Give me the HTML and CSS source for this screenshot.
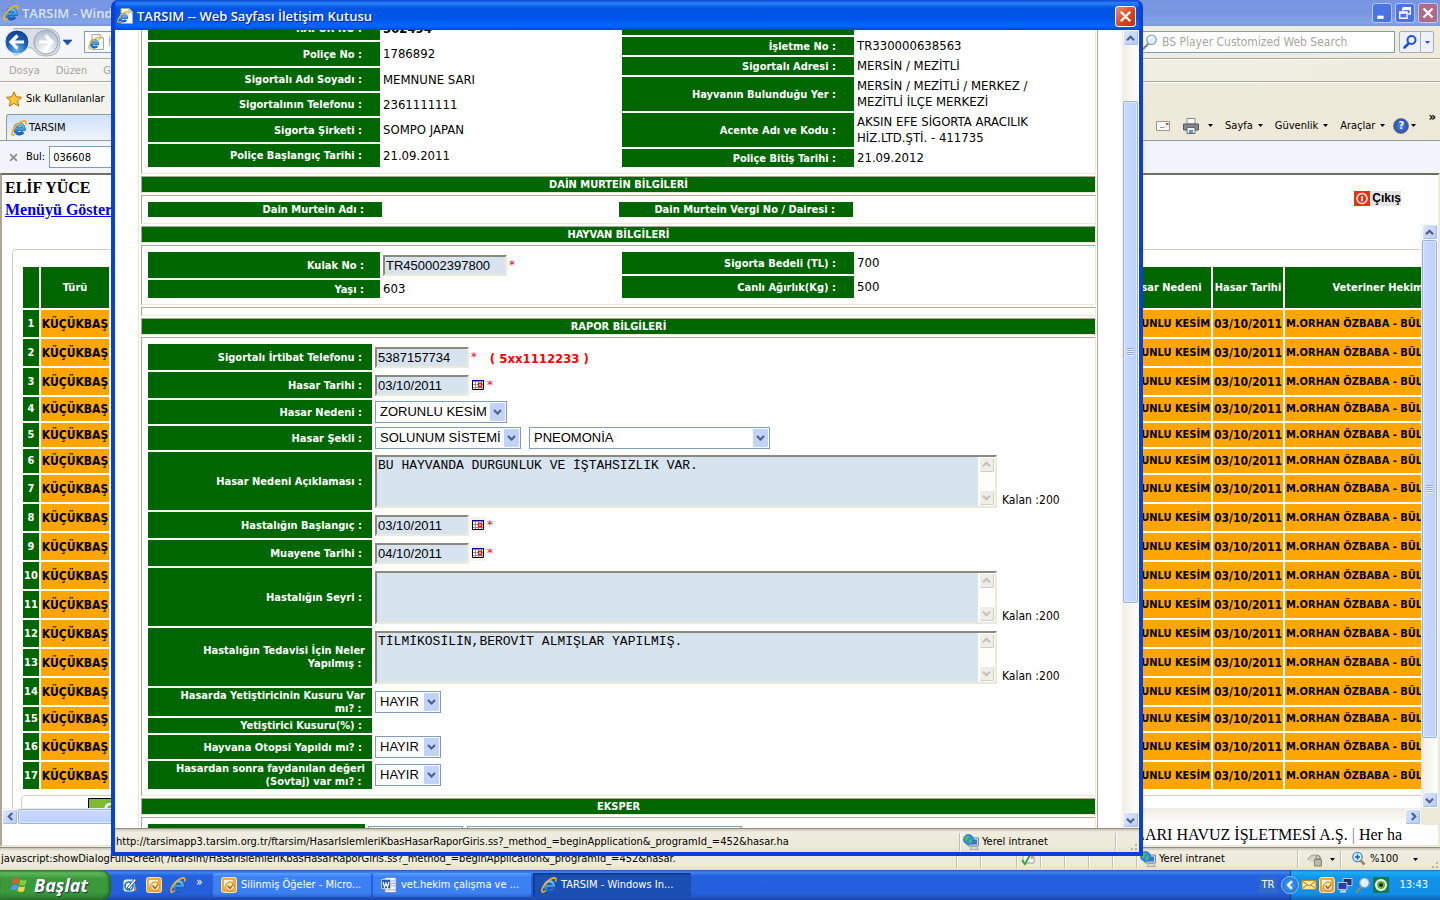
FILE: index.html
```
<!DOCTYPE html>
<html lang="tr">
<head>
<meta charset="utf-8">
<title>TARSIM</title>
<link rel="stylesheet" href="styles.css">
</head>
<body>
<svg class="defs" aria-hidden="true">
  <defs>
    <linearGradient id="gBlue" x1="0" y1="0" x2="0" y2="1"><stop offset="0" stop-color="#6cc6fb"/><stop offset="1" stop-color="#1668c8"/></linearGradient>
    <radialGradient id="gNav" cx=".5" cy=".85" r=".9"><stop offset="0" stop-color="#5fb4f0"/><stop offset=".5" stop-color="#1c5cb4"/><stop offset="1" stop-color="#123a80"/></radialGradient>
    <radialGradient id="gNavOff" cx=".5" cy=".9" r=".9"><stop offset="0" stop-color="#ffffff"/><stop offset="1" stop-color="#aebccb"/></radialGradient>
  </defs>
  <symbol id="ie" viewBox="0 0 16 16">
    <path d="M4 9h9A4.500 4.700 0 1 0 12 12" fill="none" stroke="#0f4f9e" stroke-width="3.400"/>
    <path d="M4 9h9A4.500 4.700 0 1 0 12 12" fill="none" stroke="url(#gBlue)" stroke-width="2.500"/>
    <path d="M5 13.500C2.500 15.700.8 15.600.9 13.500 1.200 9 8 1.300 13 .9c2.300-.1 2.300 1.800 1.400 3.800" fill="none" stroke="#f0b020" stroke-width="1.600"/>
  </symbol>
  <symbol id="iepage" viewBox="0 0 16 16">
    <path d="M4 .5h8l3.500 3.500v11.500H4z" fill="#fdfdfd" stroke="#a9a89d"/><path d="M12 .5V4h3.500" fill="#ddd" stroke="#a9a89d"/>
    <use href="#ie" x="0" y="3" width="12" height="12"/>
  </symbol>
  <symbol id="lens" viewBox="0 0 16 16">
    <path d="M6 10L1.500 14.800" stroke="#8b8578" stroke-width="2.200" stroke-linecap="round"/><circle cx="9.500" cy="5.800" r="4.800" fill="#dcf1fd" stroke="#8f9ba6" stroke-width="1.200"/><path d="M7 5a3 3 0 0 1 3-2" stroke="#fff" stroke-width="1.500" fill="none"/>
  </symbol>
  <symbol id="lensblue" viewBox="0 0 16 16">
    <path d="M6.500 9.500L2.500 13.500" stroke="#1f50dd" stroke-width="2.600" stroke-linecap="round"/><circle cx="9.500" cy="6" r="4" fill="#eef5ff" stroke="#1f50dd" stroke-width="2"/>
  </symbol>
  <symbol id="up" viewBox="0 0 9 9"><path d="M1 6.300L4.500 2.800 8 6.300" fill="none" stroke="currentColor" stroke-width="2.100"/></symbol>
  <symbol id="down" viewBox="0 0 9 9"><path d="M1 2.800L4.500 6.300 8 2.800" fill="none" stroke="currentColor" stroke-width="2.100"/></symbol>
  <symbol id="left" viewBox="0 0 9 9"><path d="M6.300 1L2.800 4.500 6.300 8" fill="none" stroke="currentColor" stroke-width="2.100"/></symbol>
  <symbol id="right" viewBox="0 0 9 9"><path d="M2.800 1L6.300 4.500 2.800 8" fill="none" stroke="currentColor" stroke-width="2.100"/></symbol>
  <symbol id="x" viewBox="0 0 12 12"><path d="M1.500 1.500l9 9M10.500 1.500l-9 9" stroke="currentColor" stroke-width="2.200"/></symbol>
  <symbol id="tri" viewBox="0 0 5 3"><path d="M0 0h5L2.500 3z" fill="currentColor"/></symbol>
  <symbol id="globe" viewBox="0 0 16 16">
    <path d="M5 4h10.500v8H5z" fill="#cfdcec" stroke="#7b8ba5"/><path d="M6.500 5.500h7.500v5H6.500z" fill="#3c74d0"/><path d="M8 12.500h6l1.500 3H7z" fill="#d9d9d4" stroke="#8c8c88" stroke-width=".6"/>
    <circle cx="5.500" cy="5.500" r="5" fill="#2f8fe0" stroke="#125aa8" stroke-width=".6"/><path d="M2 3c2-2 4-1.500 4 0s-2 1-2 3-2 0-2.800-1zM6 6c2-1 3 0 3 1s-2 3-3 2z" fill="#4fc04a"/>
  </symbol>
  <symbol id="cal" viewBox="0 0 16 16">
    <path d="M0 0h16v16H0z" fill="#f3f1f3"/><path d="M2.500 3.500h11v9h-11z" fill="#fff" stroke="#000"/><path d="M2 3h12v1.500H2z" fill="#10108a"/><path d="M5.500 5v7M8.500 5v7M11.500 5v7M3 7.500h10M3 10.500h10" stroke="#8d8d8d"/><path d="M8.500 6.500h3v3h-3z" fill="#fff" stroke="#f01010" stroke-width="1.300"/>
  </symbol>
  <symbol id="outlook" viewBox="0 0 16 16">
    <rect x=".5" y=".5" width="15" height="15" rx="2" fill="#f4a836" stroke="#fbe4bd"/><path d="M3 3h9l-1 4 3 1-1 5H5L3 9z" fill="#fff3dc"/><circle cx="9" cy="9.500" r="4.500" fill="#fbe3a2" stroke="#c97d1b"/><path d="M6.500 8.500l2.500 3 3-4" fill="none" stroke="#8a5a18" stroke-width="1.200"/>
  </symbol>
  <symbol id="word" viewBox="0 0 16 16">
    <path d="M4 .5h11v15H4z" fill="#fff" stroke="#6d8cc7"/><path d="M9 4h5M9 6.500h5M9 9h5M6 13h8" stroke="#8aa3d4"/><path d="M.5 2.500h9v9h-9z" fill="#2c55a8" stroke="#b9cbec"/><path d="M2 5l1.500 5L5 6l1.500 4L8 5" fill="none" stroke="#fff" stroke-width="1.200"/>
  </symbol>
  <symbol id="desk" viewBox="0 0 16 16">
    <rect x="1" y="2" width="12" height="13" rx="3" fill="#e4f2ff" stroke="#2b77c0"/><circle cx="7" cy="9" r="4" fill="#fff" stroke="#1c6fbb" stroke-width="1.600"/><path d="M5 11l7.500-9.500L14.500 3 7 12z" fill="#fff" stroke="#1b3f70" stroke-width=".9"/><path d="M13.500 10v4" stroke="#e07a30" stroke-width="1.500"/>
  </symbol>
</svg>

<div class="desktop">
  <section class="browser">
    <header class="titlebar dim">
      <svg class="i16"><use href="#ie"/></svg>
      <span class="caption">TARSIM - Windows</span>
      <span class="grow"></span>
      <button class="winbtn" aria-label="Simge durumuna küçült"><svg viewBox="0 0 17 17"><path d="M4 11h6v3H4z" fill="#fff"/></svg></button>
      <button class="winbtn" aria-label="Geri yükle"><svg viewBox="0 0 17 17"><path d="M6.500 3.500h7v6h-2M6.500 5h7M6.500 3.500v3M3.500 7.500h7v6h-7zM3.500 8.500h7" fill="none" stroke="#fff" stroke-width="1.300"/></svg></button>
      <button class="winbtn rose" aria-label="Kapat"><svg viewBox="-3 -3 18 18"><use href="#x" width="12" height="12"/></svg></button>
    </header>

    <div class="navbar">
      <svg class="navkeys" viewBox="0 0 76 32">
        <path d="M14 2.500h32q14 0 14 14t-14 13.500q-8 0-12-6-5-5-9 0-4 5-11 5z" fill="#d9dee4" stroke="#aab2bb"/>
        <circle cx="17" cy="16" r="12" fill="url(#gNav)" stroke="#e8eef6"/><path d="M17.500 9.500L11 16l6.500 6.500M11.500 16H24" stroke="#fff" stroke-width="3.200" fill="none"/>
        <circle cx="46" cy="16" r="12" fill="url(#gNavOff)" stroke="#9aa4af"/><path d="M45.500 9.500L52 16l-6.500 6.500M51.500 16H39" stroke="#fff" stroke-width="3.200" fill="none"/>
        <path d="M63 14h9l-4.500 5z" fill="#1b56a5" stroke="#123c78" stroke-width=".6"/>
      </svg>
      <div class="address"><svg class="i16"><use href="#iepage"/></svg><input aria-label="Adres" value="http://tarsimapp3.tarsim.org.tr"></div>
      <div class="searchbox"><svg class="i16"><use href="#lens"/></svg><input aria-label="Ara" value="BS Player Customized Web Search"></div>
      <div class="searchgo">
        <button aria-label="Ara"><svg class="i16"><use href="#lensblue"/></svg></button>
        <button aria-label="Arama seçenekleri"><svg class="tri blue"><use href="#tri"/></svg></button>
      </div>
    </div>

    <nav class="menubar"><span>Dosya</span><span>Düzen</span><span>Görünüm</span></nav>

    <div class="commands">
      <div class="side">
        <div class="favs"><svg viewBox="0 0 16 16" class="i16"><path d="M8 .8l2.200 5 5.300.5-4 3.600 1.200 5.300L8 12.400l-4.700 2.800 1.200-5.300-4-3.600 5.300-.5z" fill="#ffc53a" stroke="#b97710"/></svg>Sık Kullanılanlar</div>
        <div class="tab"><svg class="i16"><use href="#ie"/></svg>TARSIM</div>
      </div>
      <div class="tools">
        <svg class="i16" viewBox="0 0 16 16"><path d="M1.500 3.500h13v9h-13z" fill="#fbfbf9" stroke="#98978d"/><path d="M11 5h2.500v2H11z" fill="#d44"/><path d="M5 9.500h4.500" stroke="#99a"/></svg>
        <span class="tool"><svg class="i16" viewBox="0 0 16 16"><path d="M4 .5h8V6H4z" fill="#fff" stroke="#889"/><path d="M.5 6h15v6H.5z" fill="#85878c" stroke="#55575c"/><path d="M4 9.500h8v6H4z" fill="#eaf4ff" stroke="#667"/><path d="M6 12h4v3H6z" fill="#69b"/></svg><svg class="tri wide"><use href="#tri"/></svg></span>
        <span class="tool">Sayfa<svg class="tri"><use href="#tri"/></svg></span>
        <span class="tool">Güvenlik<svg class="tri"><use href="#tri"/></svg></span>
        <span class="tool">Araçlar<svg class="tri"><use href="#tri"/></svg></span>
        <span class="tool help"><span class="q">?</span><svg class="tri"><use href="#tri"/></svg></span>
        <b class="more">»</b>
      </div>
    </div>

    <div class="findbar"><svg class="fx"><use href="#x"/></svg><label for="bul">Bul:</label><input id="bul" value="036608"></div>

    <main class="page">
      <div class="user">
        <div><b>ELİF YÜCE</b><a href="#">Menüyü Göster</a></div>
        <button class="exit"><svg viewBox="0 0 16 15"><path d="M0 0h16v15H0z" fill="#dc3a17"/><circle cx="8" cy="7.500" r="5" fill="none" stroke="#ffe9df" stroke-width="1.500"/><path d="M8 5v5" stroke="#fff" stroke-width="1.600"/></svg>Çıkış</button>
      </div>
      <div class="frame">
        <div class="listing">
          <div class="group">
            <table>
              <colgroup><col class="c1"><col class="c2"><col><col class="c4"><col class="c5"><col class="c6"></colgroup>
              <thead><tr><th></th><th>Türü</th><td></td><th>Hasar Nedeni</th><th>Hasar Tarihi</th><th>Veteriner Hekim</th></tr></thead>
              <tbody>
                <tr><th>1</th><td>KÜÇÜKBAŞ</td><td></td><td>ZORUNLU KESİM</td><td>03/10/2011</td><td>M.ORHAN ÖZBABA - BÜLENT</td></tr>
                <tr><th>2</th><td>KÜÇÜKBAŞ</td><td></td><td>ZORUNLU KESİM</td><td>03/10/2011</td><td>M.ORHAN ÖZBABA - BÜLENT</td></tr>
                <tr><th>3</th><td>KÜÇÜKBAŞ</td><td></td><td>ZORUNLU KESİM</td><td>03/10/2011</td><td>M.ORHAN ÖZBABA - BÜLENT</td></tr>
                <tr class="low"><th>4</th><td>KÜÇÜKBAŞ</td><td></td><td>ZORUNLU KESİM</td><td>03/10/2011</td><td>M.ORHAN ÖZBABA - BÜLENT</td></tr>
                <tr class="low"><th>5</th><td>KÜÇÜKBAŞ</td><td></td><td>ZORUNLU KESİM</td><td>03/10/2011</td><td>M.ORHAN ÖZBABA - BÜLENT</td></tr>
                <tr class="low"><th>6</th><td>KÜÇÜKBAŞ</td><td></td><td>ZORUNLU KESİM</td><td>03/10/2011</td><td>M.ORHAN ÖZBABA - BÜLENT</td></tr>
                <tr><th>7</th><td>KÜÇÜKBAŞ</td><td></td><td>ZORUNLU KESİM</td><td>03/10/2011</td><td>M.ORHAN ÖZBABA - BÜLENT</td></tr>
                <tr><th>8</th><td>KÜÇÜKBAŞ</td><td></td><td>ZORUNLU KESİM</td><td>03/10/2011</td><td>M.ORHAN ÖZBABA - BÜLENT</td></tr>
                <tr><th>9</th><td>KÜÇÜKBAŞ</td><td></td><td>ZORUNLU KESİM</td><td>03/10/2011</td><td>M.ORHAN ÖZBABA - BÜLENT</td></tr>
                <tr><th>10</th><td>KÜÇÜKBAŞ</td><td></td><td>ZORUNLU KESİM</td><td>03/10/2011</td><td>M.ORHAN ÖZBABA - BÜLENT</td></tr>
                <tr><th>11</th><td>KÜÇÜKBAŞ</td><td></td><td>ZORUNLU KESİM</td><td>03/10/2011</td><td>M.ORHAN ÖZBABA - BÜLENT</td></tr>
                <tr><th>12</th><td>KÜÇÜKBAŞ</td><td></td><td>ZORUNLU KESİM</td><td>03/10/2011</td><td>M.ORHAN ÖZBABA - BÜLENT</td></tr>
                <tr><th>13</th><td>KÜÇÜKBAŞ</td><td></td><td>ZORUNLU KESİM</td><td>03/10/2011</td><td>M.ORHAN ÖZBABA - BÜLENT</td></tr>
                <tr><th>14</th><td>KÜÇÜKBAŞ</td><td></td><td>ZORUNLU KESİM</td><td>03/10/2011</td><td>M.ORHAN ÖZBABA - BÜLENT</td></tr>
                <tr class="low"><th>15</th><td>KÜÇÜKBAŞ</td><td></td><td>ZORUNLU KESİM</td><td>03/10/2011</td><td>M.ORHAN ÖZBABA - BÜLENT</td></tr>
                <tr><th>16</th><td>KÜÇÜKBAŞ</td><td></td><td>ZORUNLU KESİM</td><td>03/10/2011</td><td>M.ORHAN ÖZBABA - BÜLENT</td></tr>
                <tr><th>17</th><td>KÜÇÜKBAŞ</td><td></td><td>ZORUNLU KESİM</td><td>03/10/2011</td><td>M.ORHAN ÖZBABA - BÜLENT</td></tr>
              </tbody>
            </table>
            <div class="pager"><button>Getir</button></div>
          </div>
        </div>
        <div class="vbar"><span class="sb"><svg><use href="#up"/></svg></span><span class="thumb t-page"><i></i></span><span class="grow"></span><span class="sb"><svg><use href="#down"/></svg></span></div>
        <div class="hbar"><span class="sb"><svg><use href="#left"/></svg></span><span class="thumb t-wide"></span><span class="grow"></span><span class="sb"><svg><use href="#right"/></svg></span></div>
        <div class="corner"></div>
      </div>
      <div class="marquee">HAVUZLARI HAVUZ İŞLETMESİ A.Ş. <i>|</i> Her ha</div>
    </main>

    <footer class="status">
      <span class="grow">javascript:showDialogFullScreen('/ftarsim/HasarIslemleriKbasHasarRaporGiris.ss?_method_=beginApplication&amp;_programId_=452&amp;hasar.</span>
      <span class="pane"></span><span class="pane wide"></span>
      <span class="pane check"><svg class="i16" viewBox="0 0 16 16"><path d="M3 2h11v10H3z" fill="#fff" stroke="#99a"/><path d="M2 9l3 4 5-9" fill="none" stroke="#34a83a" stroke-width="2"/><path d="M12 4v4" stroke="#d66" stroke-width="1.500"/></svg></span>
      <span class="pane"></span><span class="pane"></span><span class="pane"></span><span class="pane"></span>
      <span class="pane zone"><svg class="i16"><use href="#globe"/></svg>Yerel intranet</span>
      <span class="pane lock"><svg class="i16" viewBox="0 0 16 16"><path d="M1 9a7 6 0 0 1 13-2l-5 1v5" fill="#d5d4cc" stroke="#9b9a92"/><path d="M7.500 8.500h7v6.500h-7z" fill="#bbb9ae" stroke="#838278"/><path d="M9 8V6.500a2 2 0 0 1 4 0V8" fill="none" stroke="#838278"/></svg><svg class="tri"><use href="#tri"/></svg></span>
      <span class="pane zoom"><svg class="i16" viewBox="0 0 16 16"><path d="M9.500 9.500l4 4" stroke="#b58048" stroke-width="2.500"/><circle cx="6.500" cy="6" r="4.700" fill="#d9efff" stroke="#4887c8" stroke-width="1.300"/><path d="M4 6h5M6.500 3.500v5" stroke="#1e5db5" stroke-width="1.600"/></svg>%100<svg class="tri"><use href="#tri"/></svg></span>
      <span class="grip"></span>
    </footer>
  </section>

  <section class="dialog" role="dialog" aria-label="TARSIM -- Web Sayfası İletişim Kutusu">
    <header class="titlebar">
      <svg class="i16"><use href="#iepage"/></svg>
      <span class="caption">TARSIM -- Web Sayfası İletişim Kutusu</span>
      <span class="grow"></span>
      <button class="winbtn red" aria-label="Kapat"><svg viewBox="-3 -3 18 18"><use href="#x" width="12" height="12"/></svg></button>
    </header>
    <div class="body">
      <form class="sheet">
        <div class="box two">
          <div class="col">
            <div class="row h23"><span class="lb">RAPOR NO :</span><b>302494</b></div>
            <div class="row h24"><span class="lb">Poliçe No :</span><span>1786892</span></div>
            <div class="row h23"><span class="lb">Sigortalı Adı Soyadı :</span><span>MEMNUNE SARI</span></div>
            <div class="row h23"><span class="lb">Sigortalının Telefonu :</span><span>2361111111</span></div>
            <div class="row h24"><span class="lb">Sigorta Şirketi :</span><span>SOMPO JAPAN</span></div>
            <div class="row h23"><span class="lb">Poliçe Başlangıç Tarihi :</span><span>21.09.2011</span></div>
          </div>
          <div class="col">
            <div class="row h18"><span class="lb">TARSIM No :</span><b>20112200342</b></div>
            <div class="row h18"><span class="lb">İşletme No :</span><span>TR330000638563</span></div>
            <div class="row h18"><span class="lb">Sigortalı Adresi :</span><span>MERSİN / MEZİTLİ</span></div>
            <div class="row h34"><span class="lb">Hayvanın Bulunduğu Yer :</span><span>MERSİN / MEZİTLİ / MERKEZ /<br>MEZİTLİ İLÇE MERKEZİ</span></div>
            <div class="row h34"><span class="lb">Acente Adı ve Kodu :</span><span>AKSIN EFE SİGORTA ARACILIK<br>HİZ.LTD.ŞTİ. - 411735</span></div>
            <div class="row h18"><span class="lb">Poliçe Bitiş Tarihi :</span><span>21.09.2012</span></div>
          </div>
        </div>
        <h2>DAİN MURTEİN BİLGİLERİ</h2>
        <div class="box two dain">
          <div class="col"><div class="row h15"><span class="lb">Dain Murtein Adı :</span></div></div>
          <div class="col"><div class="row h15"><span class="lb">Dain Murtein Vergi No / Dairesi :</span></div></div>
        </div>
        <h2>HAYVAN BİLGİLERİ</h2>
        <div class="box two">
          <div class="col near">
            <div class="row h26"><label class="lb" for="kulak">Kulak No :</label><span class="vals"><input class="in w124" id="kulak" value="TR450002397800"><em>*</em></span></div>
            <div class="row h18"><span class="lb">Yaşı :</span><span>603</span></div>
          </div>
          <div class="col">
            <div class="row h22"><span class="lb">Sigorta Bedeli (TL) :</span><span>700</span></div>
            <div class="row h22"><span class="lb">Canlı Ağırlık(Kg) :</span><span>500</span></div>
          </div>
        </div>
        <div class="empty"></div>
        <h2>RAPOR BİLGİLERİ</h2>
        <div class="box rapor">
          <div class="row h26"><label class="lb" for="tel">Sigortalı İrtibat Telefonu :</label><span class="vals"><input class="in" id="tel" value="5387157734"><em>*</em><strong>( 5xx1112233 )</strong></span></div>
          <div class="row h26"><label class="lb" for="ht">Hasar Tarihi :</label><span class="vals"><input class="in" id="ht" value="03/10/2011"><svg class="i16 cal"><use href="#cal"/></svg><em>*</em></span></div>
          <div class="row h24"><label class="lb" for="hn">Hasar Nedeni :</label><span class="vals"><select class="w132" id="hn"><option>ZORUNLU KESİM</option></select></span></div>
          <div class="row h24"><label class="lb" for="hs">Hasar Şekli :</label><span class="vals"><select class="w146" id="hs"><option>SOLUNUM SİSTEMİ</option></select><select class="w241" aria-label="Hasar şekli ayrıntısı"><option>PNEOMONİA</option></select></span></div>
          <div class="row h58"><label class="lb" for="ac">Hasar Nedeni Açıklaması :</label><span class="vals end"><span class="ta"><textarea id="ac">BU HAYVANDA DURGUNLUK VE İŞTAHSIZLIK VAR.</textarea><span class="vbar off"><span class="sb"><svg><use href="#up"/></svg></span><span class="grow"></span><span class="sb"><svg><use href="#down"/></svg></span></span></span><span>Kalan :200</span></span></div>
          <div class="row h26"><label class="lb" for="hb">Hastalığın Başlangıç :</label><span class="vals"><input class="in" id="hb" value="03/10/2011"><svg class="i16 cal"><use href="#cal"/></svg><em>*</em></span></div>
          <div class="row h26"><label class="lb" for="mt">Muayene Tarihi :</label><span class="vals"><input class="in" id="mt" value="04/10/2011"><svg class="i16 cal"><use href="#cal"/></svg><em>*</em></span></div>
          <div class="row h58"><label class="lb" for="se">Hastalığın Seyri :</label><span class="vals end"><span class="ta"><textarea id="se"></textarea><span class="vbar off"><span class="sb"><svg><use href="#up"/></svg></span><span class="grow"></span><span class="sb"><svg><use href="#down"/></svg></span></span></span><span>Kalan :200</span></span></div>
          <div class="row h58"><label class="lb" for="te">Hastalığın Tedavisi İçin Neler<br>Yapılmış :&nbsp;</label><span class="vals end"><span class="ta"><textarea id="te">TİLMİKOSİLİN,BEROVİT ALMIŞLAR YAPILMIŞ.</textarea><span class="vbar off"><span class="sb"><svg><use href="#up"/></svg></span><span class="grow"></span><span class="sb"><svg><use href="#down"/></svg></span></span></span><span>Kalan :200</span></span></div>
          <div class="row h28"><label class="lb" for="ku">Hasarda Yetiştiricinin Kusuru Var<br>mı? :&nbsp;</label><span class="vals"><select class="w66" id="ku"><option>HAYIR</option></select></span></div>
          <div class="row h15"><span class="lb">Yetiştirici Kusuru(%) :</span></div>
          <div class="row h24"><label class="lb" for="ot">Hayvana Otopsi Yapıldı mı? :</label><span class="vals"><select class="w66" id="ot"><option>HAYIR</option></select></span></div>
          <div class="row h28"><label class="lb" for="so">Hasardan sonra faydanılan değeri<br>(Sovtaj) var mı? :&nbsp;</label><span class="vals"><select class="w66" id="so"><option>HAYIR</option></select></span></div>
        </div>
        <h2>EKSPER</h2>
        <div class="box eksper">
          <div class="row h26"><span class="lb"></span><span class="vals"><select class="w95" aria-label="Eksper türü"><option></option></select><select class="w275" aria-label="Eksper"><option></option></select></span></div>
        </div>
      </form>
      <div class="vbar"><span class="sb"><svg><use href="#up"/></svg></span><span class="gap"></span><span class="thumb t-dialog"><i></i></span><span class="grow"></span><span class="sb"><svg><use href="#down"/></svg></span></div>
    </div>
    <footer class="status">
      <span class="grow">http://tarsimapp3.tarsim.org.tr/ftarsim/HasarIslemleriKbasHasarRaporGiris.ss?_method_=beginApplication&amp;_programId_=452&amp;hasar.ha</span>
      <span class="pane zone"><svg class="i16"><use href="#globe"/></svg>Yerel intranet</span>
      <span class="pane tail"></span>
      <span class="grip"></span>
    </footer>
  </section>
</div>

<footer class="taskbar">
  <button class="start"><svg viewBox="0 0 20 18"><path d="M3 3q3-2 6 0L8 8q-3-2-6 0z" fill="#f0562b"/><path d="M10 3.500q3 2 7 0l-1.500 5q-3 2-6.500 0z" fill="#7ed040"/><path d="M1.700 9.500q3-2 6 0l-1.200 5q-3-2-6 0z" fill="#4f9bf5"/><path d="M8.700 10q3 2 6.500 0l-1.200 5q-3 2-6.500 0z" fill="#fbd23c"/></svg>Başlat</button>
  <div class="quick"><svg class="i16"><use href="#desk"/></svg><svg class="i16"><use href="#outlook"/></svg><svg class="i16"><use href="#ie"/></svg><span>»</span></div>
  <button class="task"><svg class="i16"><use href="#outlook"/></svg>Silinmiş Öğeler - Micro...</button>
  <button class="task"><svg class="i16"><use href="#word"/></svg>vet.hekim çalışma ve ...</button>
  <button class="task on"><svg class="i16"><use href="#ie"/></svg>TARSIM - Windows In...</button>
  <span class="grow"></span>
  <span class="lang">TR</span>
  <div class="tray">
    <button class="expand" aria-label="Gizli simgeleri göster"><svg><use href="#left"/></svg></button>
    <svg class="i16" viewBox="0 0 16 16"><path d="M1 3.500h14v9H1z" fill="#ffe79b" stroke="#c78b1e"/><path d="M1 4l7 5 7-5M1 12l5-4M15 12l-5-4" fill="none" stroke="#b87b16"/></svg>
    <svg class="i16"><use href="#outlook"/></svg>
    <svg class="i16" viewBox="0 0 16 16"><path d="M6 1.500h9v7H6z" fill="#1a2f80" stroke="#b6c6e4"/><path d="M1 5.500h9v7H1z" fill="#27409d" stroke="#b6c6e4"/><path d="M3 14.500h6" stroke="#dde" stroke-width="2"/></svg>
    <svg class="i16"><use href="#lens"/></svg>
    <svg class="i16" viewBox="0 0 16 16"><path d="M0 0h16v16H0z" fill="#177a4c"/><circle cx="8" cy="8" r="6" fill="#fff"/><circle cx="8" cy="8" r="4" fill="#59b52e"/><circle cx="8" cy="8" r="1.800" fill="#111"/></svg>
    <time>13:43</time>
  </div>
</footer>
</body>
</html>
```
FILE: styles.css
```
:root {
  --ui: "DejaVu Sans Condensed", "Noto Sans", sans-serif;
  --green: #006600;
  --beige: #ece9d8;
}
* { box-sizing: border-box; }
html, body { height: 100%; }
body {
  margin: 0;
  display: flex;
  flex-direction: column;
  overflow: hidden;
  font: 11px/14px var(--ui);
  color: #000;
}
button, input, select, textarea { font: inherit; color: inherit; margin: 0; border-radius: 0; }
button { padding: 0; border: 0; background: none; }
svg { display: block; flex: none; }
.defs { position: absolute; width: 0; height: 0; }
.i16 { width: 16px; height: 16px; }
.grow { flex: 1; min-width: 0; white-space: nowrap; overflow: hidden; }
.tri { width: 5px; height: 3px; }
.tri.blue { color: #1f50dd; }

.desktop { flex: 1; min-height: 0; position: relative; }
.browser { height: 100%; display: flex; flex-direction: column; background: var(--beige); overflow: hidden; }

/* title bars */
.titlebar {
  display: flex;
  align-items: center;
  flex: none;
  height: 30px;
  gap: 4px;
  padding: 2px 3px 0 2px;
  color: #fff;
  background: linear-gradient(#0a48cf 0, #2b80fa 3px, #0054e3 8px, #0055e8 18px, #0066ff 26px, #0046c8 100%);
}
.caption { font: 600 13px/18px "Open Sans", sans-serif; white-space: nowrap; text-shadow: 1px 1px 0 #0a1883; }
.titlebar.dim { height: 26px; padding: 0 2px 1px 3px; gap: 3px; background: linear-gradient(#7695e2, #7a96df 50%, #82a6e8 85%, #7b95da); }
.dim .caption { color: #dbe4f8; text-shadow: none; }
.winbtn { width: 21px; height: 21px; border: 1px solid #fff; border-radius: 3px; background: linear-gradient(135deg, #5f8df0, #2458d8); }
.winbtn svg { width: 19px; height: 19px; color: #fff; }
.dim .winbtn { width: 20px; height: 20px; border-color: #b9c9f2; background: linear-gradient(135deg, #4b77e4, #4672e6); }
.dim .winbtn svg { width: 18px; height: 18px; }
.dim .winbtn.rose { background: #b06a86; }
.winbtn.red { background: linear-gradient(135deg, #f08b6a, #d8401a 60%, #c0330f); }

/* toolbars */
.navbar { display: flex; align-items: center; height: 33px; padding: 0 6px 0 0; background: linear-gradient(90deg, #f3f6fa, #f1efe4 60%, #eeebdb); border-bottom: 1px solid #aca899; }
.navkeys { width: 76px; height: 32px; }
.address, .searchbox { display: flex; align-items: center; gap: 4px; height: 22px; border: 1px solid #7f9db9; background: #fff; }
.address { flex: 1; margin: 0 20px 0 8px; padding-left: 3px; }
.searchbox { width: 256px; padding: 0 2px; margin-right: 4px; color: #a7a69a; }
.address input, .searchbox input { flex: 1; min-width: 0; border: 0; padding: 0; background: none; color: #a7a69a; outline: 0; font-size: 12px; }
.searchgo { display: flex; height: 22px; border: 1px solid #a9adba; border-radius: 2px; background: #edf1fa; }
.searchgo button { width: 20px; display: grid; place-items: center; }
.searchgo button + button { width: 13px; border-left: 1px solid #a9adba; }
.menubar { display: flex; gap: 16px; align-items: center; height: 23px; padding: 0 9px; color: #a7a69a; background: linear-gradient(90deg, #f4f4f2, #efecdf); border-top: 1px solid #fff; border-bottom: 1px solid #aca899; }
.commands { display: flex; justify-content: space-between; height: 59px; background: linear-gradient(90deg, #f4f4f0, #efecdf 40%, #ece9d8); border-top: 1px solid #fff; border-bottom: 1px solid #919b9c; }
.side { width: 300px; display: flex; flex-direction: column; justify-content: space-between; }
.favs { display: flex; align-items: center; gap: 4px; padding: 0 6px; height: 31px; }
.tab { display: flex; align-items: center; gap: 2px; height: 26px; margin-left: 6px; padding-left: 4px; border: 1px solid #919b9c; border-bottom: 0; border-radius: 3px 3px 0 0; background: linear-gradient(#cde1fb, #f0f4fa); }
.tools { display: flex; align-items: center; padding: 28px 4px 0 0; gap: 12px; }
.tool { display: flex; align-items: center; gap: 5px; }
.tri.wide { margin-left: 4px; }
.help { gap: 2px; margin-left: -4px; }
.q { width: 16px; height: 16px; border-radius: 50%; border: 1px solid #777; background: radial-gradient(#4f86e6, #1a3c9c); color: #fff; font-weight: bold; text-align: center; line-height: 14px; }
.more { font-size: 13px; align-self: flex-start; line-height: 12px; }
.findbar { display: flex; align-items: center; gap: 8px; height: 32px; padding: 0 9px; background: #f1f5fb; }
.fx { width: 9px; height: 9px; color: #8a8a86; }
.findbar input { width: 200px; height: 22px; margin-left: -4px; border: 1px solid #7f9db9; padding: 0 3px; }

/* page behind the dialog */
.page { flex: 1; min-height: 0; display: flex; flex-direction: column; background: #fff; border-top: 2px solid #716f64; border-left: 2px solid #aca899; border-right: 2px solid var(--beige); border-bottom: 2px solid var(--beige); }
.user { display: flex; justify-content: space-between; align-items: flex-start; height: 49px; padding: 2px 37px 0 3px; font: bold 16px/22px "Liberation Serif", serif; }
.user b, .user a { display: block; }
.user a { color: #0000ee; }
.exit { display: flex; align-items: center; gap: 2px; height: 15px; margin-top: 14px; background: #e4e4e4; font: bold 12px/15px "Liberation Sans", sans-serif; }
.exit svg { width: 16px; height: 15px; }
.frame { flex: 1; min-height: 0; display: grid; grid-template: minmax(0, 1fr) 17px / minmax(0, 1fr) 17px; }
.listing { overflow: hidden; padding: 25px 0 0 10px; }
.group { width: calc(100% + 80px); border: 1px solid #d0d0bf; border-radius: 4px 0 0 0; padding: 15px 0 0 8px; }
.group table { table-layout: fixed; width: calc(100% - 27px); border-spacing: 2px; font-weight: bold; }
.group th, .group td { padding: 0; height: 27px; white-space: nowrap; overflow: hidden; }
.group thead th { height: 41px; }
.group .low th, .group .low td { height: 24px; }
.group th { background: var(--green); color: #fff; }
.group tbody td { background: #ffa500; text-align: center; font-size: 12px; }
.group tbody td:nth-child(4) { font-size: 11px; text-align: right; padding-right: 1px; }
.group tbody td:last-child { font-size: 11px; text-align: left; padding-left: 1px; }
.group tbody td:nth-child(3) { background: none; }
.c1 { width: 16px; } .c2 { width: 68px; } .c4 { width: 94px; } .c5 { width: 70px; } .c6 { width: 186px; }
.pager { margin-top: 4px; height: 40px; border: 1px solid #d0d0bf; border-radius: 4px 0 0 0; padding: 2px 0 0 66px; }
.pager button { width: 120px; height: 24px; border: 1px solid #000; background: #82bb32; color: #fff; font: bold 16px/20px "Liberation Sans", sans-serif; text-align: left; padding-left: 15px; }
.marquee { flex: none; height: 20px; font: 16px/20px "Liberation Serif", serif; text-align: right; padding-right: 36px; white-space: nowrap; }
.marquee i { color: #77a; font-style: normal; }

/* scroll bars */
.vbar, .hbar { display: flex; align-items: center; }
.vbar { width: 17px; flex-direction: column; background: linear-gradient(90deg, #eeede5, #fefefb); }
.hbar { height: 17px; background: linear-gradient(#eeede5, #fefefb); }
.corner { background: var(--beige); }
.sb { flex: none; width: 16px; height: 16px; display: grid; place-items: center; border: 1px solid #fff; border-radius: 2px; background: linear-gradient(135deg, #dbe6fe, #b5cbf8); box-shadow: inset -1px -1px 0 #a5bbea; color: #4d6185; }
.sb svg { width: 9px; height: 9px; }
.thumb { flex: none; display: grid; place-items: center; border: 1px solid #98b1e4; border-radius: 2px; background: linear-gradient(90deg, #cbdafe, #bdd0fb); box-shadow: inset 0 0 0 1px #dfe9ff; }
.vbar .thumb { width: 15px; }
.thumb i { width: 7px; height: 8px; background: repeating-linear-gradient(#8ca8e6 0 1px, #eef4fe 1px 2px); }
.t-page { height: 498px; }
.t-dialog { height: 502px; }
.gap { height: 55px; flex: none; }
.t-wide { width: 1100px; height: 15px; background: linear-gradient(#cbdafe, #bdd0fb); }
.vbar.off { background: #fffffb; }
.off .sb { background: #efeee6; box-shadow: inset -1px -1px 0 #cfcdc0; color: #c5c3b8; }

/* status bars */
.status { flex: none; display: flex; align-items: center; height: 23px; padding-left: 1px; background: linear-gradient(#c6c3b4 0, #efede0 3px, #ece9d8 18px, #e2dfcc); border-top: 1px solid #8f8d80; }
.pane { display: flex; align-items: center; width: 24px; height: 18px; border-left: 1px solid #c2bfae; box-shadow: inset 1px 0 0 #fff; padding-left: 3px; }
.pane.wide { width: 36px; }
.pane.zone { width: 161px; gap: 3px; }
.pane.lock { width: 43px; padding-left: 9px; gap: 7px; }
.pane.zoom { width: 88px; padding-left: 10px; gap: 3px; }
.pane.zoom .tri { margin-left: 12px; }
.grip { align-self: flex-end; width: 12px; height: 12px; background: radial-gradient(circle at 1px 1px, #b8b49f 1px, transparent 1px) 0 0 / 4px 4px; clip-path: polygon(100% 0, 100% 100%, 0 100%); }

/* dialog */
.dialog { position: absolute; top: 0; bottom: 14px; left: 111px; right: 297px; display: flex; flex-direction: column; border: solid #0a3fd8; border-width: 0 4px 4px; border-radius: 7px 7px 0 0; background: #0a3fd8; overflow: hidden; }
.dialog .status { height: 24px; padding-top: 3px; }
.dialog .pane.zone { width: 156px; }
.dialog .pane.tail { width: 12px; }
.body { flex: 1; min-height: 0; display: flex; background: #fff; overflow: hidden; }
.sheet { flex: 1; min-width: 0; margin: -20px 24px -100px 23px; padding: 0 1px 0 2px; border-left: 1px solid var(--beige); border-right: 1px solid #aca899; display: flex; flex-direction: column; gap: 2px; font-size: 13px; line-height: 16px; }
.box { flex: none; padding: 6px; border: 1px solid; border-color: #aca899 var(--beige) var(--beige) #aca899; display: grid; gap: 2px; }
.empty { flex: none; height: 9px; border: 1px solid; border-color: #aca899 var(--beige) var(--beige) #aca899; }
.two { grid-template-columns: 472fr 467fr; }
.sheet h2 { flex: none; height: 17px; margin: 0; border: 1px solid; border-color: #aca899 var(--beige) var(--beige) #aca899; background: var(--green); color: #fff; font: bold 11px/15px var(--ui); text-align: center; }
.col { display: grid; gap: 2px; align-content: start; }
.row { display: grid; grid-template-columns: 232px minmax(0, 1fr); column-gap: 3px; align-items: center; white-space: nowrap; }
.lb { height: 100%; display: flex; align-items: center; justify-content: flex-end; text-align: right; padding-right: 18px; background: var(--green); color: #fff; font-weight: bold; font-size: 11px; line-height: 13px; }
.near .lb { padding-right: 16px; }
.dain .row { grid-template-columns: 234px minmax(0, 1fr); }
.dain { grid-template-columns: 469fr 470fr; }
.rapor .row { grid-template-columns: 224px minmax(0, 1fr); }
.rapor .lb { padding-right: 10px; }
.rapor .lb:has(br) { padding-right: 7px; }
.eksper .row { grid-template-columns: 217px minmax(0, 1fr); }
.h15 { height: 15px; } .h18 { height: 18px; } .h22 { height: 22px; } .h23 { height: 23px; } .h24 { height: 24px; }
.h26 { height: 26px; } .h28 { height: 28px; } .h34 { height: 34px; } .h58 { height: 58px; }
.vals { display: flex; align-items: center; }
.vals em { color: #ff0033; font-style: normal; margin-left: 2px; }
.vals strong { color: #f00; margin-left: 13px; padding-top: 4px; }
.vals select + select { margin-left: 8px; }
.vals.end { font-size: 12px; }
.eksper select + select { margin-left: 4px; }
.cal { margin-left: 1px; }
.cal + em { margin-left: 1px; }
.in { width: 94px; height: 21px; padding: 0 1px; background: #d7e3ef; border: 2px solid; border-color: #8b897c #ece9d8 #ece9d8 #8b897c; font: 13px/16px "Liberation Sans", sans-serif; }
.w124 { width: 124px; }
select { appearance: none; height: 22px; padding: 0 4px; border: 1px solid #7f9db9; font: 13px/18px "Liberation Sans", sans-serif; background: #fff url("data:image/svg+xml,%3Csvg xmlns='http://www.w3.org/2000/svg' width='15' height='18'%3E%3Crect width='15' height='18' rx='1' fill='%23c1d3fc'/%3E%3Cpath d='M4 7l3.500 3.500L11 7' fill='none' stroke='%234d6185' stroke-width='2.100'/%3E%3C/svg%3E") no-repeat right 1px center; }
.w132 { width: 132px; } .w146 { width: 146px; } .w241 { width: 241px; } .w66 { width: 66px; } .w95 { width: 95px; } .w275 { width: 275px; }
.end { align-items: flex-end; gap: 5px; }
.ta { display: flex; width: 622px; height: 53px; border: 2px solid; border-color: #8b897c #ece9d8 #ece9d8 #8b897c; background: #d7e3ef; }
.ta textarea { flex: 1; min-width: 0; border: 0; outline: 0; resize: none; padding: 1px; background: none; overflow: hidden; font: 13px/15px "Liberation Mono", monospace; }

/* taskbar */
.taskbar { flex: none; display: flex; align-items: center; gap: 2px; height: 30px; color: #fff; background: linear-gradient(#1f50b8 0, #3e86f0 2px, #2560de 6px, #245edb 24px, #1b46a8 100%); }
.start { display: flex; align-items: center; gap: 4px; width: 111px; height: 30px; padding-left: 10px; border-radius: 0 10px 10px 0; background: linear-gradient(#3a8a3a 0, #5cb85a 3px, #3b973b 9px, #3a9a3c 22px, #2a7a2c 100%); box-shadow: inset -2px 0 3px #1f5f20; font: italic bold 18px/24px "Open Sans", sans-serif; text-shadow: 1px 1px 1px #234; }
.start svg { width: 20px; height: 18px; }
.quick { display: flex; gap: 8px; width: 98px; padding-left: 9px; }
.quick span { font-size: 12px; line-height: 10px; margin-left: 2px; }
.task { display: flex; align-items: center; gap: 4px; width: 158px; height: 24px; padding-left: 8px; border-radius: 2px; background: linear-gradient(#5a9bfa 0, #3c81f3 4px, #3c81f3 20px, #2a66d4); white-space: nowrap; }
.task.on { background: #1b4fb4; box-shadow: inset 1px 1px 2px #0c2c70; }
.lang { padding: 1px 3px; background: #316ac5; margin-right: 11px; }
.tray { display: flex; align-items: center; gap: 2px; height: 30px; padding-right: 12px; background: linear-gradient(#0d6ecb 0, #19b0f4 2px, #1292e8 8px, #128ee6 24px, #0d62b8 100%); border-left: 1px solid #0a3a86; }
.expand { width: 18px; height: 18px; margin-left: -10px; display: grid; place-items: center; border-radius: 50%; background: radial-gradient(#4aa5f5, #1261c9); border: 1px solid #8cc4f6; }
.expand svg { width: 10px; height: 10px; }
.tray time { margin-left: 8px; }
```
